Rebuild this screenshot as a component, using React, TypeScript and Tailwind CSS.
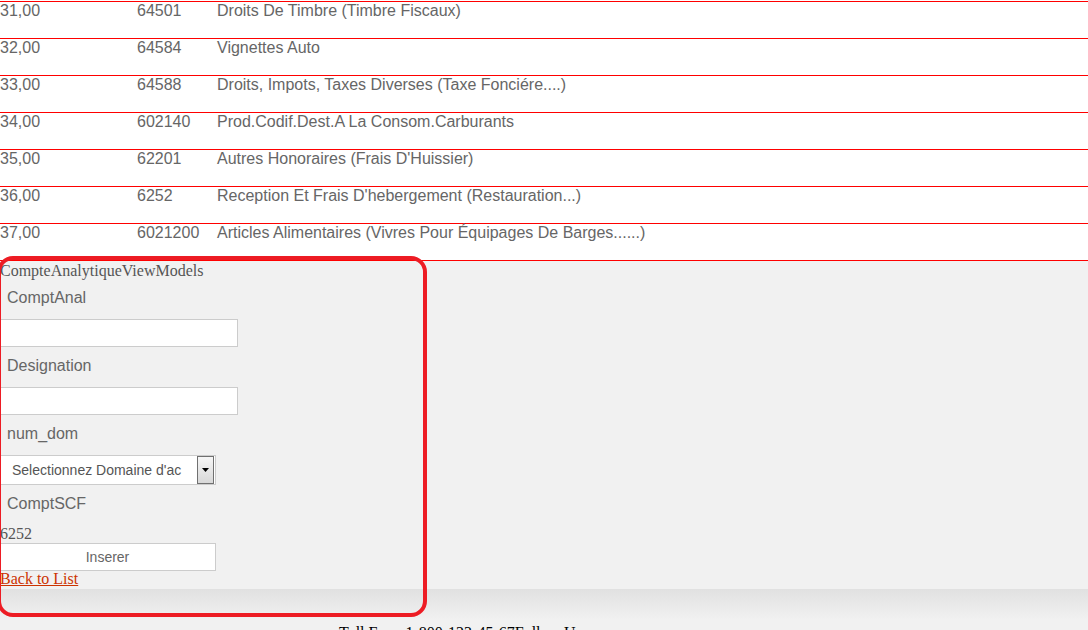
import * as React from "react"

const rows = [
  { id: "31,00", code: "64501", label: "Droits De Timbre (Timbre Fiscaux)" },
  { id: "32,00", code: "64584", label: "Vignettes Auto" },
  { id: "33,00", code: "64588", label: "Droits, Impots, Taxes Diverses (Taxe Fonciére....)" },
  { id: "34,00", code: "602140", label: "Prod.Codif.Dest.A La Consom.Carburants" },
  { id: "35,00", code: "62201", label: "Autres Honoraires (Frais D'Huissier)" },
  { id: "36,00", code: "6252", label: "Reception Et Frais D'hebergement (Restauration...)" },
  { id: "37,00", code: "6021200", label: "Articles Alimentaires (Vivres Pour Équipages De Barges......)" },
]

const sans = "font-['Liberation_Sans',Arial,sans-serif]"
const serif = "font-['Liberation_Serif','Times_New_Roman',serif]"

function Label({ children, className = "" }: { children: React.ReactNode; className?: string }) {
  return (
    <div className={`${sans} pl-[7px] text-[16px] leading-[18px] text-[#666] ${className}`}>{children}</div>
  )
}

export default function App() {
  return (
    <div className="relative h-[630px] w-[1088px] overflow-hidden bg-white">
      {/* liste */}
      <div className={`${sans} mt-px border-b border-[#ff0000] text-[16px] text-[#666]`}>
        {rows.map((r) => (
          <div key={r.id} className="grid h-[37px] grid-cols-[137px_80px_1fr] border-t border-[#ff0000] leading-[18px]">
            <div>{r.id}</div>
            <div>{r.code}</div>
            <div>{r.label}</div>
          </div>
        ))}
      </div>

      {/* formulaire */}
      <div className="bg-[#f1f1f1] pt-px pb-px">
        <div className={`${serif} text-[16px] leading-[18px] text-[#555]`}>CompteAnalytiqueViewModels</div>
        <Label className="mt-[9px]">ComptAnal</Label>
        <div className="-ml-px mt-[12px] h-[28px] w-[239px] border border-[#cccccc] bg-white" />
        <Label className="mt-[10px]">Designation</Label>
        <div className="-ml-px mt-[12px] h-[28px] w-[239px] border border-[#cccccc] bg-white" />
        <Label className="mt-[10px]">num_dom</Label>
        <div className="-ml-px mt-[12px] flex h-[30px] w-[217px] items-center border border-[#cccccc] bg-white">
          <span className={`${sans} flex-1 pl-[12px] text-[14px] text-[#555]`}>Selectionnez Domaine d'ac</span>
          <span className="mr-px flex h-[28px] w-[17px] items-center justify-center border border-[#707070] bg-gradient-to-b from-[#f6f6f6] to-[#d8d8d8]">
            <svg width="7" height="4" viewBox="0 0 7 4">
              <path d="M0 0h7L3.5 4z" fill="#000" />
            </svg>
          </span>
        </div>
        <Label className="mt-[10px]">ComptSCF</Label>
        <div className={`${serif} mt-[12px] text-[16px] leading-[18px] text-[#555]`}>6252</div>
        <button className={`${sans} -ml-px block h-[28px] w-[217px] border border-[#cccccc] bg-white text-[14px] text-[#666]`}>
          Inserer
        </button>
        <a href="#" className={`${serif} -mt-px block w-fit text-[16px] leading-[18px] text-[#cc3300] underline`}>
          Back to List
        </a>
      </div>

      {/* pied de page */}
      <div className="h-[31px] bg-gradient-to-b from-[#e1e1e1] to-[#f1f1f1]" />
      <div className="h-[40px] bg-[#f1f1f1] pl-[339px]">
        <span className={`${serif} text-[16px] leading-[18px] text-black`}>Toll Free: 1-800-123-45-67Follow Us</span>
      </div>

      {/* annotation */}
      <div className="pointer-events-none absolute left-[-3px] top-[256px] h-[361px] w-[430px] rounded-[16px] border-[4px] border-[#ed1c24]" />
    </div>
  )
}
